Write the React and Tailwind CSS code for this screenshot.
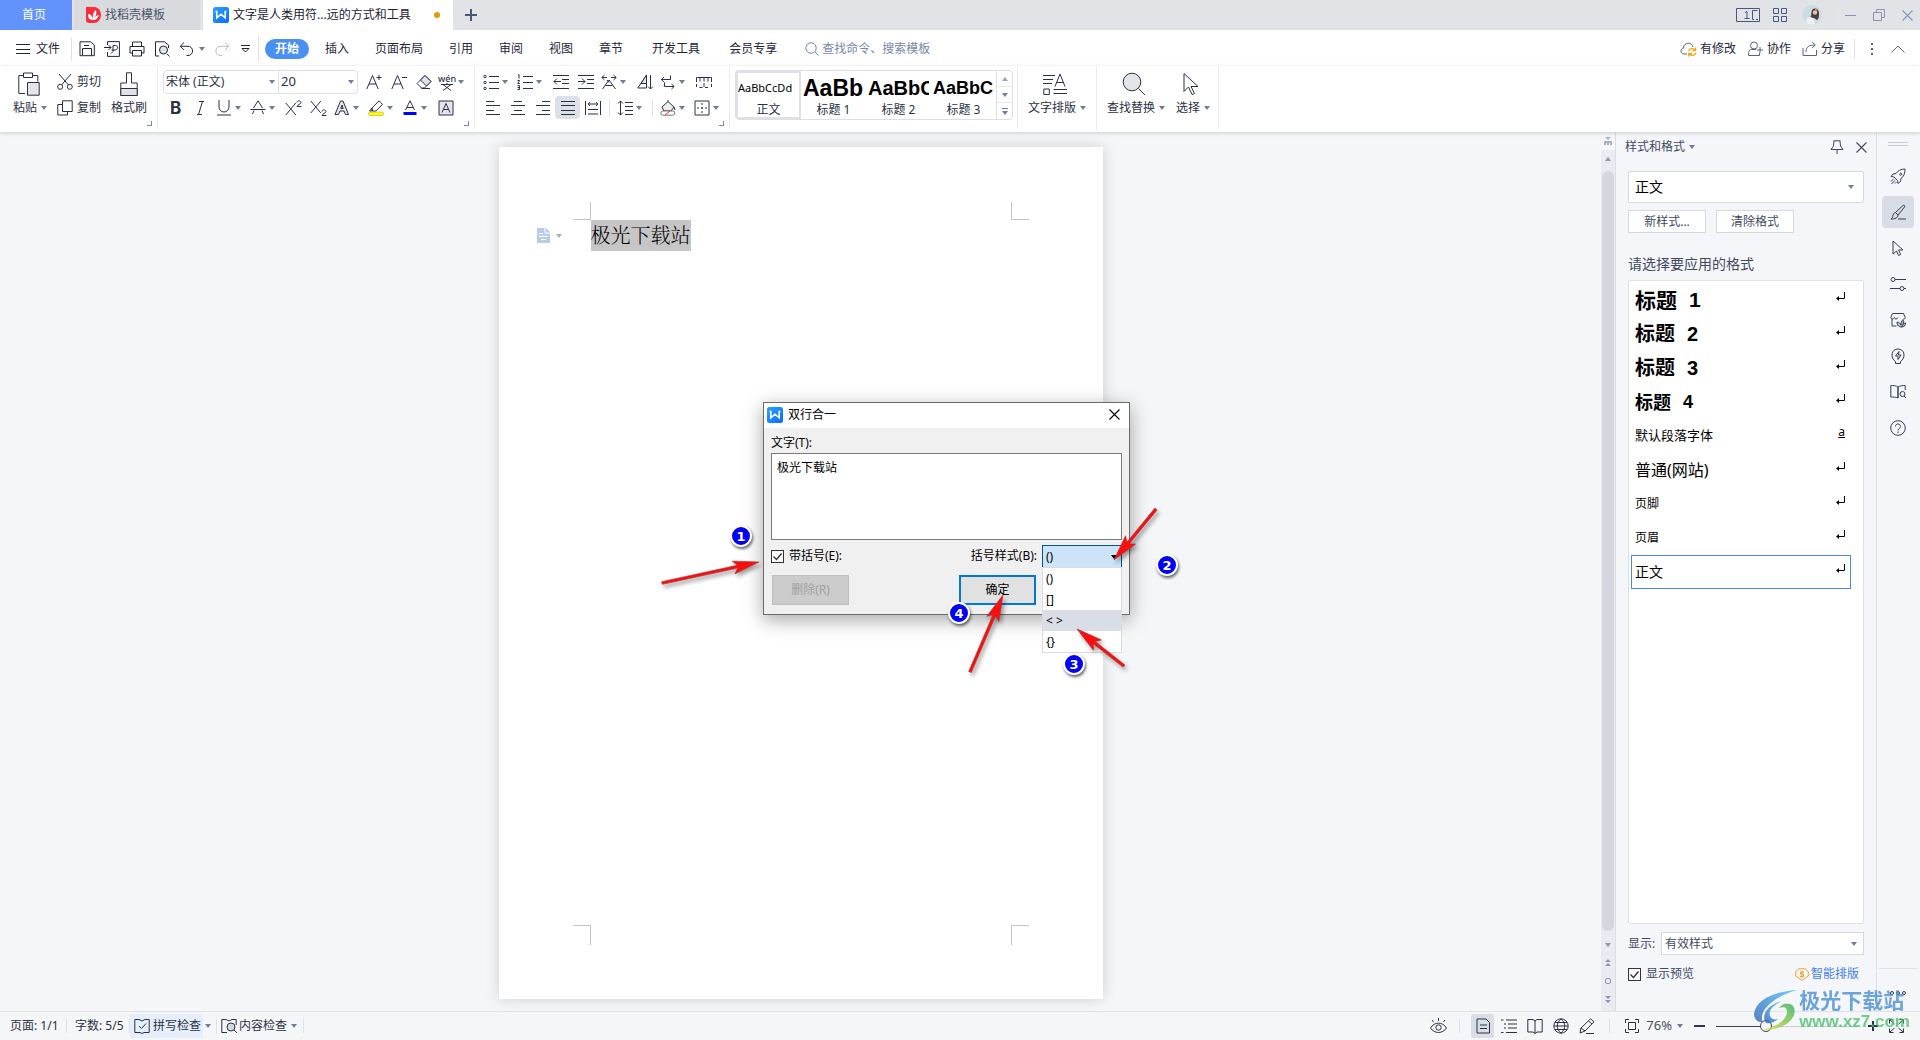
import { useState } from "react";
import clsx from "clsx";

const Ico = ({ w = 16, h = 16, children, className, sw = 1 }) => (
  <svg
    width={w}
    height={h}
    viewBox={`0 0 ${w} ${h}`}
    fill="none"
    stroke="currentColor"
    strokeWidth={sw}
    className={clsx("shrink-0", className)}
    aria-hidden="true"
  >
    {children}
  </svg>
);

const Caret = ({ className }) => (
  <svg width="6" height="4" viewBox="0 0 6 4" className={clsx("shrink-0", className || "fill-[#6f7d99]")} aria-hidden="true">
    <path d="M0 0h6L3 4z" />
  </svg>
);

const Sep = ({ className }) => <span className={clsx("w-px shrink-0 bg-[#dfe1e6]", className)} />;

// Ribbon tool, the ones with a caret are a bit wider
const Tool = ({ label, caret, active, children }) => (
  <button
    aria-label={label}
    className={clsx(
      "flex h-[23px] shrink-0 items-center rounded-sm",
      caret ? "w-[34px]" : "w-[25px] justify-center",
      active && "bg-[#dce0e7]"
    )}
  >
    {caret ? (
      <>
        <span className="flex w-[22px] justify-center">{children}</span>
        <Caret />
      </>
    ) : (
      children
    )}
  </button>
);

const WpsLogo = ({ size = 16 }) => (
  <svg width={size} height={size} viewBox="0 0 16 16" className="shrink-0" aria-hidden="true">
    <defs>
      <linearGradient id="wps" x1="0" y1="0" x2="1" y2="1">
        <stop offset="0" stopColor="#2aa3fb" />
        <stop offset="1" stopColor="#0a6cff" />
      </linearGradient>
    </defs>
    <rect width="16" height="16" rx="2.5" fill="url(#wps)" />
    <path d="M2.500 4.500h1.300v6.300L8 7.200l4.200 3.600V4.500h1.300" fill="none" stroke="#fff" strokeWidth="1.6" />
  </svg>
);

const Tick = () => (
  <svg width="13" height="13" viewBox="0 0 13 13" fill="none" stroke="#333" strokeWidth="1.4" className="pointer-events-none [grid-area:1/1]" aria-hidden="true">
    <path d="M2.500 6.500l3 3 5-6" />
  </svg>
);

const CheckField = ({ id, label, gap }) => {
  const [checked, setChecked] = useState(true);
  return (
    <div className={clsx("flex items-center", gap)}>
      <span className="grid">
        <input
          id={id}
          type="checkbox"
          checked={checked}
          onChange={() => setChecked(!checked)}
          className="size-[13px] appearance-none border border-[#333] bg-white [grid-area:1/1]"
        />
        {checked && <Tick />}
      </span>
      <label htmlFor={id}>{label}</label>
    </div>
  );
};

const CloseX = ({ size = 11 }) => (
  <svg width={size} height={size} viewBox="0 0 11 11" fill="none" stroke="currentColor" strokeWidth="1.1" aria-hidden="true">
    <path d="M.5.5l10 10M10.500.5l-10 10" />
  </svg>
);

const TitleBar = () => (
  <header className="flex h-[30px] shrink-0 items-stretch bg-[#e1e3e7]">
    <button className="w-[72px] bg-[#6292fb] pr-1 text-white">首页</button>
    <button className="ml-0.5 flex w-[126px] items-center bg-[#d8dadd] pl-3 text-[#4b5468]">
      <svg width="15" height="16" viewBox="0 0 15 16" className="mr-1" aria-hidden="true">
        <path d="M0 0h8a7 8 0 0 1 0 16H3a3 3 0 0 1-3-3z" fill="#fb2b3b" />
        <path d="M7 13C2 13 2 9 2 7c3 0 4 2 5 5C7 8 7 5 10 3c1 3 0 6-2 8 2-2 3-3 5-3-1 3-3 5-6 5z" fill="#fff" />
      </svg>
      找稻壳模板
    </button>
    <button className="ml-[3px] flex w-[250px] items-center bg-white pl-2.5 text-[#1c2233]">
      <WpsLogo />
      <span className="ml-1">文字是人类用符...远的方式和工具</span>
      <span className="mr-[13px] ml-auto size-1.5 rounded-full bg-[#e59700]" />
    </button>
    <button aria-label="新建" className="flex w-9 items-center justify-center text-[#4a5878]">
      <Ico w={12} h={12} sw={2}>
        <path d="M6 0v12M0 6h12" />
      </Ico>
    </button>
    <div className="ml-auto flex items-center text-[#46587c]">
      <button aria-label="窗口">
        <Ico w={24} h={14}>
          <path d="M.5.5h23v13H.5zM21.500 2.500h-5v9h1.500M20 11.500h2M9 4.500l2-1v7M8.500 10.500h5" />
        </Ico>
      </button>
      <button aria-label="应用" className="ml-[13px]">
        <Ico w={14} h={14}>
          <path d="M.5.5h5v5h-5zM8.500.5h5v5h-5zM.5 8.500h5v5h-5zM8.500 8.500h5v5h-5z" />
        </Ico>
      </button>
      <button aria-label="账号" className="ml-[15px]">
        <svg width="20" height="20" viewBox="0 0 20 20" aria-hidden="true">
          <circle cx="10" cy="10" r="10" fill="#cbdde2" />
          <path d="M10 5c3-3 7-1 7 3 0 3 0 6-2 7l-3-2-5 0c3-1 2-5 3-8z" fill="#4a3d42" />
          <circle cx="13" cy="7.500" r="2.200" fill="#e8bfae" />
          <circle cx="14" cy="4.500" r="1" fill="#e3a63b" />
          <path d="M5 13c3-2 5-1 7 1l1 5c-4 2-8 0-9-2z" fill="#e9f1f3" />
        </svg>
      </button>
      <Sep className="ml-2.5 h-5 bg-[#c9ccd4]" />
      <div className="mr-[3px] ml-3 flex items-center gap-[17px] text-[#8695b3]">
        <button aria-label="最小化">
          <Ico w={11} h={11}>
            <path d="M0 5.500h11" />
          </Ico>
        </button>
        <button aria-label="还原">
          <Ico w={12} h={12}>
            <path d="M.5 3.500h8v8h-8zM3.500 3V.5h8v8H9" />
          </Ico>
        </button>
        <button aria-label="关闭" className="mr-1">
          <CloseX />
        </button>
      </div>
    </div>
  </header>
);

const menus = ["插入", "页面布局", "引用", "审阅", "视图", "章节"];

const MenuBar = () => (
  <nav className="flex h-9 shrink-0 items-center bg-white pt-0.5 text-[#1f2638]">
    <button className="flex items-center pl-4">
      <Ico w={14} className="mr-1.5">
        <path d="M0 3.500h14M0 8.500h14M0 12.500h14" />
      </Ico>
      文件
    </button>
    <Sep className="ml-[11px] h-6" />
    <div className="ml-[7px] flex items-center gap-[9px]">
      <button aria-label="保存">
        <Ico>
          <path d="M1 .8h10.500L15.300 4v10.700H1zM3.500 14.500V7.500h9v7M5 4.500h5" />
        </Ico>
      </button>
      <button aria-label="输出为PDF">
        <Ico>
          <path d="M3.500 4V.6h11.900v14.800H3.500V11M0 6.500h7M4.500 4L7 6.500 4.500 9M7 12.500l2-2V4.500h2.500c3 0 2.500 4 0 4.500H7.500" />
        </Ico>
      </button>
      <button aria-label="打印">
        <Ico>
          <path d="M3.500 5V1h9v4M3.500 12H1V5.500h14V12h-2.500M3.500 9.500h9V15h-9z" />
        </Ico>
      </button>
      <button aria-label="打印预览">
        <Ico>
          <path d="M5 15H1.500V.8h9L14.500 4v3M13 13l2.500 2.500" />
          <circle cx="9.500" cy="9" r="4" fill="#dfe2e8" />
        </Ico>
      </button>
      <button aria-label="撤销" className="flex items-center gap-1">
        <Ico>
          <path d="M5 1.500L1.200 5.300 5 9M1.500 5.300H9a4.500 4.500 0 0 1 0 9.200H7.500" />
        </Ico>
        <Caret />
      </button>
      <button aria-label="恢复" className="text-[#b5b8c0]">
        <Ico>
          <path d="M11 1.500l3.800 3.800L11 9M14.500 5.300H6.500a4.500 4.500 0 0 0 0 9.200H8" />
        </Ico>
      </button>
      <button aria-label="更多命令" className="ml-0.5">
        <Ico w={9} h={8}>
          <path d="M0 .5h9M1 3.500h7L4.500 7z" />
        </Ico>
      </button>
    </div>
    <Sep className="ml-2 h-6" />
    <button className="mr-[3px] ml-1.5 h-5 w-11 rounded-full bg-[#4a8ff2] font-bold text-white">开始</button>
    {menus.map((m) => (
      <button key={m} className="px-[13px]">
        {m}
      </button>
    ))}
    <button className="ml-[3px] px-[13px]">开发工具</button>
    <button className="ml-[3px] px-[13px]">会员专享</button>
    <div className="ml-[15px] flex items-center text-[#7887a5]">
      <Ico w={14} h={14} className="mr-[3px]">
        <circle cx="6" cy="6" r="5.200" />
        <path d="M10 10l3.500 3.500" />
      </Ico>
      <input
        aria-label="查找命令、搜索模板"
        placeholder="查找命令、搜索模板"
        className="w-32 outline-none placeholder:text-[#7887a5]"
      />
    </div>
    <div className="ml-auto flex items-center">
      <button className="flex items-center gap-[3px]">
        <Ico w={17}>
          <path d="M7 13H4C0 13 0 7.500 3.500 7 3.500 1 12 .5 13 6" stroke="#59657e" />
          <path d="M8.500 10c1-3 5-3 6.500-1M15.500 6.500V9.500h-3M16 12c-1 3-5 3-6.500 1M8.800 15.500v-3h3" stroke="#f5a50b" strokeWidth="1.400" />
        </Ico>
        有修改
      </button>
      <button className="ml-3 flex items-center gap-1">
        <Ico w={15} className="text-[#59657e]">
          <circle cx="6" cy="4.500" r="3.500" />
          <path d="M8 8.500H3.500C1.500 8.500.5 10 .5 14.500h11V12M12 6v6M9 9h6" />
        </Ico>
        协作
      </button>
      <button className="ml-[11px] flex items-center gap-1">
        <Ico w={15} className="text-[#59657e]">
          <path d="M1 7v7.500h13.500V9M4 11c0-5 3-7 9-7M10 .8L13.300 4 10 7.200" />
        </Ico>
        分享
      </button>
      <Sep className="ml-[9px] h-5" />
      <button aria-label="更多" className="ml-4">
        <svg width="3" height="12" className="fill-[#59657e]" aria-hidden="true">
          <path d="M0 0h2v2H0zM0 5h2v2H0zM0 10h2v2H0z" />
        </svg>
      </button>
      <button aria-label="折叠功能区" className="mr-[15px] ml-[17px] text-[#59657e]">
        <Ico w={14} h={8}>
          <path d="M.5 7.500L7 1l6.500 6.500" />
        </Ico>
      </button>
    </div>
  </nav>
);

const Launcher = () => (
  <button aria-label="更多设置" className="absolute right-[5px] bottom-1 size-[5px] border-r border-b border-[#7d8aa5]" />
);

const Letter = ({ children, className }) => (
  <span className={clsx("font-['Inter','Liberation_Sans',sans-serif] leading-4", className)}>{children}</span>
);

const ClipboardGroup = () => (
  <div className="relative flex w-[158px] shrink-0 border-r border-[#ebecef] pl-[13px]">
    <button className="flex w-9 flex-col items-center pt-1.5">
      <Ico w={22} h={24} className="mr-1">
        <path d="M7 21.500H.8V3.500h19v6" />
        <path d="M5.500 1h9v4.500h-9z" fill="#fff" />
        <path d="M9.500 10.500h11.700v12.700H9.500z" fill="#e3e5e9" />
      </Ico>
      <span className="mt-1 flex items-center gap-1 self-start">
        粘贴
        <Caret />
      </span>
    </button>
    <div className="ml-2 flex w-12 flex-col gap-2.5 pt-2">
      <button className="flex items-center gap-1">
        <Ico>
          <path d="M2 0l9.500 11M14 0L4.500 11" />
          <circle cx="3.200" cy="12.800" r="2.500" />
          <circle cx="12.800" cy="12.800" r="2.500" />
        </Ico>
        剪切
      </button>
      <button className="flex items-center gap-1">
        <Ico>
          <path d="M5.500.8h9.700v10.700H5.500zM5.500 4.500H.8V15h9.700v-3.500" />
        </Ico>
        复制
      </button>
    </div>
    <button className="ml-1.5 flex flex-col items-center pt-1.5">
      <Ico w={18} h={24}>
        <path d="M6.500 11V.8h5V11h5.700v12.500H.8V11z" />
        <path d="M.8 16.500h16.400v7H.8z" fill="#dfe2e8" />
      </Ico>
      <span className="mt-1">格式刷</span>
    </button>
    <Launcher />
  </div>
);

const FontGroup = () => (
  <div className="relative flex w-[317px] shrink-0 flex-col gap-0.5 border-r border-[#ebecef] pt-1 pl-[5px]">
    <div className="flex items-center">
      <div className="mr-[3px] flex h-6 w-[195px] rounded-sm border border-[#dcdee3]">
        <div className="grid w-[115px] items-center border-r border-[#dcdee3]">
          <select aria-label="字体" className="appearance-none pl-0.5 outline-none [grid-area:1/1]">
            <option>宋体 (正文)</option>
          </select>
          <Caret className="pointer-events-none mr-[3px] justify-self-end fill-[#6f7d99] [grid-area:1/1]" />
        </div>
        <div className="grid grow items-center">
          <select aria-label="字号" className="appearance-none pl-0.5 text-[13px] outline-none [grid-area:1/1]">
            <option>20</option>
          </select>
          <Caret className="pointer-events-none mr-[3px] justify-self-end fill-[#6f7d99] [grid-area:1/1]" />
        </div>
      </div>
      <Tool label="增大字号">
        <Ico>
          <path d="M.8 15L6.500 1.500 12.200 15M3 10h7M10.500 3.500h5M13 1v5" />
        </Ico>
      </Tool>
      <Tool label="减小字号">
        <Ico>
          <path d="M.8 15L6.500 1.500 12.200 15M3 10h7M11 3.500h5" />
        </Ico>
      </Tool>
      <Tool label="清除格式">
        <Ico>
          <path d="M9 1.500l6 6-6.500 6.500H5.500L1 9.500z" />
          <path d="M4.500 6L9 1.500l6 6L10.500 12z" fill="#dfe2e8" />
          <path d="M5.500 14.500H14" />
        </Ico>
      </Tool>
      <Tool label="拼音指南" caret>
        <span className="flex flex-col items-center">
          <span className="text-[9px] leading-[9px] font-medium">wén</span>
          <Ico w={12} h={8}>
            <path d="M6 0v1.500M0 1.500h12M2 1.500l8 6M10 1.500l-8 6" />
          </Ico>
        </span>
      </Tool>
    </div>
    <div className="flex items-center">
      <Tool label="加粗">
        <Letter className="text-[17px] font-bold">B</Letter>
      </Tool>
      <Tool label="倾斜">
        <Ico>
          <path d="M6 1.500h5M4 14.500h5M9.500 1.500l-4 13" />
        </Ico>
      </Tool>
      <Tool label="下划线" caret>
        <Ico>
          <path d="M3 0v7a5 5 0 0 0 10 0V0M1 15h14" />
        </Ico>
      </Tool>
      <Tool label="删除线" caret>
        <Ico>
          <path d="M3.500 8L8 .8 12.500 8M.5 9.500h15M2.500 14l1.500-3.500M13.500 14L12 10.500" />
        </Ico>
      </Tool>
      <Tool label="上标">
        <Ico w={17}>
          <path d="M.8 3l10 12M10.800 3l-10 12M12 2.500c0-2.500 4-2 4 0 0 1.500-4 2.500-4 4h4.500" />
        </Ico>
      </Tool>
      <Tool label="下标">
        <Ico w={17}>
          <path d="M.8 1l10 12M10.800 1l-10 12M12 11.500c0-2.500 4-2 4 0 0 1.500-4 2.500-4 4h4.500" />
        </Ico>
      </Tool>
      <Tool label="文字效果" caret>
        <Ico>
          <path d="M1 14.500L6.500 1h2.500l5.500 13.500h-3L10 11H6l-1.500 3.500zM6.800 8.500h2.400L8 5z" fill="#e3e5ea" />
        </Ico>
      </Tool>
      <Tool label="突出显示" caret>
        <Ico>
          <path d="M4 8L11 .8l3.500 3.500L8 11H4zM4 8v3H1.500z" />
          <rect x=".5" y="12" width="15" height="3.500" rx="1.500" fill="#ffff00" stroke="#b5b04a" strokeWidth=".6" />
        </Ico>
      </Tool>
      <Tool label="字体颜色" caret>
        <Ico>
          <path d="M3.500 10L8 .8l4.500 9.200M5 7.500h6" />
          <path d="M1.500 12h13v3h-13z" fill="#0000ff" stroke="none" />
        </Ico>
      </Tool>
      <Tool label="字符底纹">
        <Ico>
          <path d="M1 1h14v14H1z" fill="#e3e5e9" />
          <path d="M4 12.500L8 3.500l4 9M5.500 9.500h5" />
        </Ico>
      </Tool>
    </div>
    <Launcher />
  </div>
);

const ParagraphGroup = () => (
  <div className="relative flex w-[255px] shrink-0 flex-col gap-[3px] border-r border-[#ebecef] pt-1 pl-[5px]">
    <div className="flex items-center">
      <Tool label="项目符号" caret>
        <Ico>
          <path d="M6 2.500h10M6 8.500h10M6 14.500h10" />
          <circle cx="2" cy="2.500" r="1.200" />
          <circle cx="2" cy="8.500" r="1.200" />
          <circle cx="2" cy="14.500" r="1.200" />
        </Ico>
      </Tool>
      <Tool label="编号" caret>
        <Ico>
          <path d="M6 2.500h10M6 8.500h10M6 14.500h10M1 1l1-.5v4M.5 6.500h2L.8 9.500h2M.5 11.500h2v4h-2M.5 13.500h2" />
        </Ico>
      </Tool>
      <Tool label="减少缩进">
        <Ico>
          <path d="M0 1.500h16M9 5.500h7M9 9.500h7M0 14.500h16M1 7.500h7M4 4.500l-3 3 3 3" />
        </Ico>
      </Tool>
      <Tool label="增加缩进">
        <Ico>
          <path d="M0 1.500h16M9 5.500h7M9 9.500h7M0 14.500h16M0 7.500h7M4 4.500l3 3-3 3" />
        </Ico>
      </Tool>
      <Tool label="中文版式" caret>
        <Ico>
          <path d="M1.500 15L8 6l6.500 9M4.500 11.500h7M.8 3.500h5.200M3.500 1L.8 3.500 3.500 6M15.200 3.500H10M12.500 1l2.700 2.500L12.500 6M6 6l2 2.500" />
        </Ico>
      </Tool>
      <Tool label="排序">
        <Ico>
          <path d="M9.500 1v13H.8zM4 9.500h5.500M13.500 1v14M11 12.500l2.500 2.500 2.500-2.500" />
          <path d="M9.500 1v8.500H4z" fill="#dfe2e8" />
        </Ico>
      </Tool>
      <Tool label="换行" caret>
        <Ico>
          <path d="M10.500 1.500v4H1.500M4 3L1.300 5.500 4 8M4.500 8.500v4h9.500M11.500 10l2.700 2.500L11.500 15" />
        </Ico>
      </Tool>
      <Tool label="标尺">
        <Ico>
          <path d="M.5 8V3.500h15V8M4 3.500v4M8 3.500v4M12 3.500v4M.5 10v3M3.500 13.500h3M9 13.500h3M15.500 10v3M8 9v4" />
        </Ico>
      </Tool>
    </div>
    <div className="flex items-center">
      <Tool label="左对齐">
        <Ico>
          <path d="M1 1.500h8M1 5.500h14M1 10.500h8M1 14.500h14" />
        </Ico>
      </Tool>
      <Tool label="居中">
        <Ico>
          <path d="M4 1.500h8M1 5.500h14M4 10.500h8M1 14.500h14" />
        </Ico>
      </Tool>
      <Tool label="右对齐">
        <Ico>
          <path d="M7 1.500h8M1 5.500h14M7 10.500h8M1 14.500h14" />
        </Ico>
      </Tool>
      <Tool label="两端对齐" active>
        <Ico>
          <path d="M1 1.500h14M1 5.500h14M1 10.500h14M1 14.500h14" />
        </Ico>
      </Tool>
      <Tool label="分散对齐">
        <Ico>
          <path d="M.5 1v14M15.500 1v14M3 4h10M5 2L3 4l2 2M11 2l2 2-2 2M3 9.500h10M3 14h10" />
        </Ico>
      </Tool>
      <Sep className="mx-1 h-[18px]" />
      <Tool label="行距" caret>
        <Ico>
          <path d="M3.500 1v14M1 3.500L3.500 1 6 3.500M1 12.500L3.500 15 6 12.500M8 2.500h8M8 6.500h8M8 10.500h8M8 14.500h8" />
        </Ico>
      </Tool>
      <Sep className="mx-1 h-[18px]" />
      <Tool label="底纹颜色" caret>
        <Ico>
          <path d="M2 7L8 1.500l6 5.500-3 4H4zM8 1.500V0M14 7l1 3" fill="#eceef1" />
          <rect x=".8" y="11" width="14" height="4.200" rx="2" fill="#fff" stroke="#777" />
          <path d="M5 15l5-4" stroke="#e33" />
        </Ico>
      </Tool>
      <Tool label="边框" caret>
        <Ico>
          <path d="M1 1h14v14H1z" />
          <path d="M8 3v10M3 8h10" strokeDasharray="2 2" />
        </Ico>
      </Tool>
    </div>
    <Launcher />
  </div>
);

const presets = [
  { name: "正文", sample: "AaBbCcDd", cls: "font-['Noto_Sans',sans-serif] text-[11px]" },
  { name: "标题 1", sample: "AaBb", cls: "font-['Liberation_Sans',sans-serif] text-[23px] font-bold" },
  { name: "标题 2", sample: "AaBbC", cls: "font-['Liberation_Sans',sans-serif] text-[20px] font-bold" },
  { name: "标题 3", sample: "AaBbC", cls: "font-['Liberation_Sans',sans-serif] text-[18px] font-bold" },
];

const StylesGroup = () => (
  <div className="flex w-[288px] shrink-0 border-r border-[#ebecef] pt-1 pl-[5px]">
    <div className="flex h-[50px] w-[278px] rounded-sm border border-[#dcdee3]">
      {presets.map((p, i) => (
        <button
          key={p.name}
          className={clsx(
            "flex w-[65px] flex-col items-center border-2",
            i === 0 ? "border-[#dfe1e6]" : "border-transparent"
          )}
        >
          <span className={clsx("h-[30px] w-[61px] overflow-hidden text-left leading-[30px] text-black", p.cls)}>
            {p.sample}
          </span>
          <span className="leading-[15px]">{p.name}</span>
        </button>
      ))}
      <div className="flex grow flex-col border-l border-[#dcdee3]">
        <button aria-label="上一行" className="flex h-4 items-center justify-center border-b border-[#e6e7ea]">
          <Caret className="rotate-180 fill-[#9aa5ba]" />
        </button>
        <button aria-label="下一行" className="flex h-4 items-center justify-center border-b border-[#e6e7ea]">
          <Caret />
        </button>
        <button aria-label="展开样式" className="flex h-4 flex-col items-center justify-center gap-0.5">
          <span className="h-px w-1.5 bg-[#6f7d99]" />
          <Caret />
        </button>
      </div>
    </div>
  </div>
);

const BigTool = ({ label, children }) => (
  <button className="flex flex-col items-center">
    <span className="flex h-6 items-center pr-1">{children}</span>
    <span className="mt-1 flex items-center gap-1">
      {label}
      <Caret />
    </span>
  </button>
);

const Ribbon = () => (
  <div className="z-10 h-[66px] shrink-0 bg-white text-[#2a3145] shadow-[0_1px_4px_rgba(0,0,0,0.18)]">
    <div className="flex h-16">
      <ClipboardGroup />
      <FontGroup />
      <ParagraphGroup />
      <StylesGroup />
      <div className="flex w-[79px] shrink-0 border-r border-[#ebecef] pt-1.5 pl-2.5">
        <BigTool label="文字排版">
          <Ico w={24} h={24}>
            <path d="M0 3.500h12M0 7.500h10M0 11.500h9M.8 17h5.500v5.500H.8z" />
            <path d="M10.500 17.500H24M10.500 21.500H24M12 14.500L17 2l5 12.500M13.500 10.500h7" />
          </Ico>
        </BigTool>
      </div>
      <div className="flex w-[122px] shrink-0 gap-[11px] border-r border-[#ebecef] pt-1.5 pl-2.5">
        <BigTool label="查找替换">
          <Ico w={24} h={24}>
            <circle cx="10" cy="10" r="8.800" fill="#e3e5e9" />
            <path d="M16.500 16.500l6.500 6.500" />
          </Ico>
        </BigTool>
        <BigTool label="选择">
          <Ico w={16} h={24}>
            <path d="M1 1.500v18l4.500-4.500 3.500 7.500 2.500-1-3.500-7h7z" />
          </Ico>
        </BigTool>
      </div>
    </div>
  </div>
);

const ScrollRail = () => (
  <div className="flex w-[15px] shrink-0 flex-col items-center border-r border-[#dcdee5] bg-[#eaebf1] text-[#8a96b3]">
    <div className="flex h-[18px] w-full items-center justify-center bg-[#f5f6f9]">
      <svg width="8" height="8" className="fill-[#a9b2c8]" aria-hidden="true">
        <path d="M1 0h6L4 3zM0 4h8v4H6V6H5v2H3V6H2v2H0z" />
      </svg>
    </div>
    <button aria-label="向上滚动" className="flex h-[21px] items-center pb-1">
      <Caret className="rotate-180 fill-[#8a96b3]" />
    </button>
    <div className="w-3 grow rounded-full bg-[#d4d7e0]" />
    <div className="flex h-20 flex-col items-center justify-between pt-3 pb-2">
      <Caret className="fill-[#8a96b3]" />
      <svg width="6" height="7" fill="currentColor" aria-hidden="true">
        <path d="M3 0l3 3H0zM3 4l3 3H0z" />
      </svg>
      <span className="size-1.5 rounded-xs border border-[#8a96b3]" />
      <svg width="6" height="7" fill="currentColor" aria-hidden="true">
        <path d="M0 0h6L3 3zM0 4h6L3 7z" />
      </svg>
    </div>
  </div>
);

const Paper = () => (
  <main className="flex min-w-0 flex-1 justify-center bg-[#f5f6f8] pt-[15px] pb-3">
    <article className="flex w-[604px] flex-col bg-white pt-[55px] pb-[54px] shadow-[0_0_14px_rgba(0,0,0,0.16)]">
      <div className="flex justify-between px-[74px]">
        <span className="h-[18px] w-[18px] border-r border-b border-[#c4c4c4]" />
        <span className="h-[18px] w-[18px] border-b border-l border-[#c4c4c4]" />
      </div>
      <div className="flex h-[31px] items-center pl-[38px]">
        <svg width="13" height="15" viewBox="0 0 13 15" aria-hidden="true">
          <path d="M0 0h9l4 4v11H0z" fill="#b8cbea" />
          <path d="M8 0v5h5M2 5.500h4M2 8.500h9M4 11.500h5" fill="none" stroke="#fff" />
        </svg>
        <Caret className="ml-1.5 fill-[#b0b0b0]" />
        <p className="ml-[29px] bg-[#c6c6c6] pb-0.5 font-['Noto_Serif_CJK_SC','Noto_Sans_CJK_SC',serif] text-[20px] leading-[29px] font-light text-black">
          极光下载站
        </p>
      </div>
      <div className="mt-auto flex justify-between px-[74px]">
        <span className="h-5 w-[18px] border-t border-r border-[#c4c4c4]" />
        <span className="h-5 w-[18px] border-t border-l border-[#c4c4c4]" />
      </div>
    </article>
  </main>
);

const styleList = [
  { name: "标题", num: "1", cls: "text-[21px] font-bold" },
  { name: "标题", num: "2", cls: "text-[20px] font-bold" },
  { name: "标题", num: "3", cls: "text-[20px] font-bold" },
  { name: "标题", num: "4", cls: "text-[18px] font-bold" },
  { name: "默认段落字体", char: true, cls: "text-[13px]" },
  { name: "普通(网站)", cls: "text-base" },
  { name: "页脚", cls: "text-xs" },
  { name: "页眉", cls: "text-xs" },
  { name: "正文", cls: "text-sm" },
];

const StylePanel = () => {
  const [current, setCurrent] = useState(8);
  return (
    <aside className="flex w-[260px] shrink-0 flex-col pr-3 pb-[29px] pl-3 text-[#3f4a60]">
      <div className="-ml-[3px] flex h-[30px] items-center gap-1">
        样式和格式
        <Caret />
        <button aria-label="固定" className="ml-auto">
          <Ico w={14} h={14}>
            <path d="M3.500.8h7M4 1l-.5 5L1 9.500h12L10.500 6 10 1M7 9.500V14" />
          </Ico>
        </button>
        <button aria-label="关闭面板" className="mr-[-3px] ml-2">
          <CloseX />
        </button>
      </div>
      <div className="mt-[9px] grid h-8 shrink-0 items-center rounded-xs border border-[#d5d8de] bg-white">
        <select aria-label="当前样式" className="appearance-none pl-1.5 text-sm text-black outline-none [grid-area:1/1]">
          <option>正文</option>
        </select>
        <Caret className="pointer-events-none mr-[9px] justify-self-end fill-[#6f7d99] [grid-area:1/1]" />
      </div>
      <div className="mt-[7px] flex gap-2.5">
        <button className="h-[23px] w-[78px] border border-[#d5d8de] bg-white">新样式...</button>
        <button className="h-[23px] w-[78px] border border-[#d5d8de] bg-white">清除格式</button>
      </div>
      <h2 className="mt-5 text-sm leading-[22px]">请选择要应用的格式</h2>
      <ul className="mt-[5px] min-h-0 grow rounded-xs border border-[#dfe1e6] bg-white p-0.5 text-black">
        {styleList.map((s, i) => (
          <li key={s.name + (s.num || "")}>
            <button
              onClick={() => setCurrent(i)}
              className={clsx(
                "flex h-[34px] w-[220px] items-center border pl-[3px]",
                i === current ? "border-[#4a8ad8]" : "border-transparent",
                s.cls
              )}
            >
              {s.name}
              {s.num && <span className="ml-3 font-['Liberation_Sans',sans-serif]">{s.num}</span>}
              <span className="mr-[5px] mb-2 ml-auto">
                {s.char ? (
                  <span className="block text-xs leading-3 underline">a</span>
                ) : (
                  <svg width="9" height="9" fill="none" stroke="#000" aria-hidden="true">
                    <path d="M8.500 0v6.500H1" />
                    <path d="M0 6.500L3 4v5z" fill="#000" stroke="none" />
                  </svg>
                )}
              </span>
            </button>
          </li>
        ))}
      </ul>
      <div className="mt-2 flex h-[23px] shrink-0 items-center justify-between">
        <label htmlFor="show">显示:</label>
        <div className="grid h-[23px] w-[203px] items-center border border-[#d5d8de] bg-white">
          <select id="show" className="appearance-none pl-[3px] outline-none [grid-area:1/1]">
            <option>有效样式</option>
          </select>
          <Caret className="pointer-events-none mr-1.5 justify-self-end fill-[#6f7d99] [grid-area:1/1]" />
        </div>
      </div>
      <div className="mt-[11px] flex h-4 items-center justify-between">
        <CheckField id="preview" label="显示预览" gap="gap-[5px]" />
        <a href="#layout" className="mr-[5px] flex items-center gap-0.5 text-[#3f7df0]">
          <Ico w={14} h={13} className="text-[#f0a12b]">
            <path d="M3.500.8h7L13.300 4v4L7 12.500.8 8V4z" />
            <path d="M9 4H5.500v2.200h3v2.300H5M7 3v7" />
          </Ico>
          智能排版
        </a>
      </div>
    </aside>
  );
};

const sideTools = [
  {
    label: "推荐",
    art: <path d="M15 1c-4 0-7 1.500-9 4.500L3 6 1 8.500l3 .5 3.500 3.500.5 3 2.500-2 .5-3C14 8.500 15 5 15 1zM3.500 11L1 13.500M5 12.500L1.500 16M6.500 14L5 15.500M10 5.500a1 1 0 1 0 1.500 1.500A1 1 0 0 0 10 5.500z" />,
  },
  { label: "样式", art: <path d="M13 1.500c1-1 2.500.5 1.500 1.500L8 11 5.500 8.500zM5.500 8.500L8 11c0 3-3 4-7 4 2-1 1.500-2 2-4 .5-1.500 1.500-2.500 2.500-2.500zM8 15h8" /> },
  { label: "选择窗格", art: <path d="M3 1v13l3.500-3 2 4.500 2.200-1L8.500 10H13z" /> },
  {
    label: "属性",
    art: (
      <>
        <circle cx="3" cy="3.500" r="2" />
        <circle cx="12" cy="12.500" r="2" />
        <path d="M5 3.500h11M0 12.500h10M14 12.500h2" />
      </>
    ),
  },
  {
    label: "稻壳",
    art: (
      <>
        <path d="M6.500 14H2V7M.8 5.500L2.500 1.500h11l1.700 4c0 1.500-1.200 1.800-1.700 1.500M.8 5.500c0 2 3 2 3.500 0 .5 2 3 2 3.500 0" />
        <path d="M11.500 15C8 15 7 12.500 7 10c2 0 3.500 1.500 4 3 0-2 .5-4 2-5.500.8 1.500.8 3 .2 4.500.8-.6 1.500-1 2.600-1-.3 2.500-1.800 4-4.300 4zM11.500 15l2-3.500" fill="#b9bdc8" />
      </>
    ),
  },
  { label: "技巧", art: <path d="M5.500 13.500C0 10 1 1 8 1s8 9 2.500 12.500v2h-5zM9 3.500L5.500 8H8v3.500L11 7H8.500z" /> },
  {
    label: "词典",
    art: (
      <>
        <path d="M8 14V3C6 1.500 3 1.500.8 1.500V13c2.200 0 5 0 7.200 1V3c2-1.500 5-1.500 7.200-1.500V6" />
        <circle cx="12.500" cy="10" r="2.500" />
        <path d="M14 12l2 2" />
      </>
    ),
  },
  {
    label: "帮助",
    art: (
      <>
        <circle cx="8" cy="8" r="7.300" />
        <path d="M5.500 6.500c0-3.500 5-3.300 5 0 0 2-2.500 2-2.500 4M8 11.500V13" />
      </>
    ),
  },
];

const SideRail = () => (
  <div className="flex w-11 shrink-0 flex-col items-center border-l border-[#dfe1e8] pt-2.5 pr-0.5 text-[#333d56]">
    <span className="h-1 w-5 border-t border-b border-[#c9ccd5]" />
    <div className="mt-3.5 flex flex-col gap-1">
      {sideTools.map((t, i) => (
        <button
          key={t.label}
          aria-label={t.label}
          className={clsx("flex size-8 items-center justify-center rounded-sm", i === 1 && "bg-[#d8dce4]")}
        >
          <Ico>{t.art}</Ico>
        </button>
      ))}
    </div>
    <span className="mt-auto h-px w-[38px] bg-[#dfe1e8]" />
    <button aria-label="更多" className="mt-[22px] mb-4 flex gap-0.5">
      <span className="size-1 rounded-full border border-[#333d56]" />
      <span className="size-1 rounded-full border border-[#333d56]" />
      <span className="size-1 rounded-full border border-[#333d56]" />
    </button>
  </div>
);

const views = [
  { label: "页面视图", art: <path d="M2 1h9l3.500 3.500V15H2zM5 7h7M5 10.500h7" /> },
  { label: "大纲", art: <path d="M0 2h2.500M5 2h11M3 6h2M7 6h9M3 10h2M7 10h9M0 14.500h2.500M5 14.500h11" /> },
  { label: "阅读版式", art: <path d="M.8 1.500H6l2 1.500 2-1.500h5.200v12.500H10L8 15.500 6 14H.8zM8 3v12.500" /> },
  {
    label: "Web版式",
    art: (
      <>
        <circle cx="8" cy="8" r="7.200" />
        <path d="M8 1c-5 4-5 10 0 14M8 1c5 4 5 10 0 14M1 8h14M2 4.500h12M2 11.500h12" />
      </>
    ),
  },
  { label: "写作模式", art: <path d="M2 10L11.500.8l3.500 3L6 13l-5 2zM2 10l4 3M9.500 3l3.500 3M7 15.500h8" /> },
];

const StatusBar = () => (
  <footer className="flex h-[29px] shrink-0 items-center border-t border-[#e0e2e6] bg-[#f5f6f8] text-[#2a3145]">
    <span className="ml-2.5 w-14">页面: 1/1</span>
    <Sep className="h-3.5" />
    <span className="ml-2 w-[54px]">字数: 5/5</span>
    <Sep className="h-3.5" />
    <button className="flex h-6 w-[73px] items-center gap-[3px] bg-[#e6eefb] pl-1">
      <Ico>
        <path d="M5 1.500H.8v13H6l2 1 2-1h5.200v-13H11M5 1.500l3 1.500 3-1.500M5 8l2.500 2.500L12 5.500" />
      </Ico>
      拼写检查
    </button>
    <Caret className="ml-0.5 fill-[#6f7d99]" />
    <Sep className="ml-[5px] h-3.5" />
    <button className="ml-1 flex items-center gap-0.5">
      <Ico>
        <path d="M5 1.500H.8v13H6M11 1.500h4.200V7M5 1.500l3 1.500 3-1.500M13 12l3 3" />
        <circle cx="10" cy="9" r="4" fill="#d5d8df" />
      </Ico>
      内容检查
      <Caret className="ml-0.5 fill-[#6f7d99]" />
    </button>
    <Sep className="ml-1.5 h-3.5" />
    <div className="ml-auto flex items-center">
      <button aria-label="护眼模式">
        <Ico w={17} className="mr-3">
          <path d="M.5 10c4-6.500 12-6.500 16 0-4 6-12 6-16 0zM8.500 3V0M3.500 4L2 2M13.500 4L15 2" />
          <circle cx="8.500" cy="9.500" r="2.700" />
        </Ico>
      </button>
      <Sep className="mr-[11px] h-3.5" />
      {views.map((v, i) => (
        <button
          key={v.label}
          aria-label={v.label}
          className={clsx("mr-[3px] flex h-6 w-[23px] items-center justify-center rounded-xs", i === 0 && "bg-[#d9dde4]")}
        >
          <Ico>{v.art}</Ico>
        </button>
      ))}
      <Sep className="ml-2 h-3.5" />
      <button aria-label="页面缩放" className="ml-[15px]">
        <Ico w={14} h={14}>
          <path d="M.5 4V.5H4M10 .5h3.500V4M13.500 10v3.500H10M4 13.500H.5V10M3.500 3.500h7v7h-7z" />
        </Ico>
      </button>
      <button className="ml-[7px] flex items-center gap-[5px] text-[13px] text-[#4a5060]">
        76%
        <Caret />
      </button>
      <button aria-label="缩小" className="ml-[11px] h-0.5 w-[11px] bg-[#2f3850]" />
      <input
        type="range"
        aria-label="缩放比例"
        min="0"
        max="100"
        defaultValue="34"
        className="mx-[11px] h-px w-[141px] appearance-none bg-linear-to-r from-[#3b455e] from-35% to-[#c9ccd3] to-35% [&::-webkit-slider-thumb]:size-3 [&::-webkit-slider-thumb]:appearance-none [&::-webkit-slider-thumb]:rounded-full [&::-webkit-slider-thumb]:border [&::-webkit-slider-thumb]:border-[#3b455e] [&::-webkit-slider-thumb]:bg-[#f5f6f8]"
      />
      <button aria-label="放大">
        <Ico w={10} h={10} sw={2}>
          <path d="M5 0v10M0 5h10" />
        </Ico>
      </button>
      <button aria-label="全屏" className="mr-4 ml-[11px]">
        <Ico w={15} h={14}>
          <path d="M.5 4.500V.5h4M10.500.5h4v4M14.500 9.500v4h-4M4.500 13.500h-4v-4M1 1l4.500 4M14 1L9.500 5M14 13L9.500 9M1 13l4.500-4" />
        </Ico>
      </button>
    </div>
  </footer>
);

const brackets = ["()", "[]", "< >", "{}"];

const CombineDialog = () => (
  <section
    role="dialog"
    aria-label="双行合一"
    className="absolute top-[402px] left-[763px] z-20 h-[213px] w-[367px] border border-[#6b6b6b] bg-[#f0f0f0] text-black shadow-[0_5px_18px_rgba(0,0,0,0.35)]"
  >
    <div className="flex h-[25px] items-center gap-[5px] bg-white pr-[9px] pb-0.5 pl-[3px]">
      <WpsLogo />
      双行合一
      <button aria-label="关闭对话框" className="ml-auto">
        <CloseX />
      </button>
    </div>
    <form className="pr-[7px] pl-[7px]">
      <label htmlFor="words" className="block pt-[7px] leading-4">
        文字(T):
      </label>
      <textarea
        id="words"
        defaultValue="极光下载站"
        className="mt-0.5 block h-[87px] w-full resize-none border border-[#7a7a7a] bg-white px-[5px] py-1.5 leading-4 outline-none"
      />
      <div className="mt-[5px] flex h-[22px] items-center">
        <CheckField id="bracket" label="带括号(E):" gap="gap-[5px]" />
        <label htmlFor="kind" className="mr-[5px] ml-auto">
          括号样式(B):
        </label>
        <div className="relative grid h-[22px] w-20 items-center border border-b-0 border-[#005499] bg-[#cce4f7]">
          <select id="kind" className="appearance-none pl-[3px] outline-none [grid-area:1/1]">
            {brackets.map((b) => (
              <option key={b}>{b}</option>
            ))}
          </select>
          <Caret className="pointer-events-none mr-1 justify-self-end fill-black [grid-area:1/1]" />
          <ul className="absolute top-[21px] -left-px w-20 border border-[#dadce0] bg-white">
            {brackets.map((b) => (
              <li key={b} className={clsx("h-[21px] pl-[3px] leading-[21px]", b === "< >" && "bg-[#d9dde6]")}>
                {b}
              </li>
            ))}
          </ul>
        </div>
      </div>
      <div className="mt-2 mr-[86px] ml-px flex justify-between">
        <button type="button" disabled className="h-[30px] w-[77px] border border-[#bfbfbf] bg-[#ccc] text-[#a0a0a0]">
          删除(R)
        </button>
        <button type="button" className="h-[30px] w-[77px] border-2 border-[#0078d7] bg-[#e1e1e1]">
          确定
        </button>
      </div>
    </form>
  </section>
);

// x/y is the tip, tx/ty is the tail
const arrows = [
  { x: 759, y: 562, tx: 662, ty: 583 },
  { x: 1114, y: 560, tx: 1156, ty: 509 },
  { x: 1077, y: 629, tx: 1124, ty: 666 },
  { x: 1003, y: 595, tx: 970, ty: 672 },
];

const Arrow = ({ x, y, tx, ty }) => {
  const len = Math.hypot(x - tx, y - ty);
  const deg = (Math.atan2(y - ty, x - tx) * 180) / Math.PI;
  return (
    <g transform={`translate(${x} ${y}) rotate(${deg})`}>
      <path
        d={`M0 0L-26 -6.500L-22 -1.400H${-len}V1.400H-22L-26 6.500Z`}
        fill="#fb0d0d"
        stroke="#a33"
        strokeWidth=".6"
        strokeLinejoin="round"
      />
    </g>
  );
};

const Badge = ({ n, className }) => (
  <span
    className={clsx(
      "absolute z-30 flex size-[22px] items-center justify-center rounded-full border-2 border-white bg-[#0000f5] font-['DejaVu_Sans',sans-serif] text-[13px] leading-none font-bold text-white shadow-[1px_2px_3px_rgba(0,0,0,0.6)]",
      className
    )}
  >
    {n}
  </span>
);

const Watermark = () => (
  <div className="pointer-events-none absolute right-2.5 bottom-1.5 z-30 flex items-center gap-0.5 opacity-80">
    <svg width="44" height="42" viewBox="0 0 44 42" aria-hidden="true">
      <defs>
        <linearGradient id="wmBlue" x1="0" y1="1" x2="1" y2="0">
          <stop offset="0" stopColor="#2c63b8" />
          <stop offset="1" stopColor="#58c4f2" />
        </linearGradient>
        <linearGradient id="wmGreen" x1="0" y1="1" x2="1" y2="0">
          <stop offset="0" stopColor="#e8e03a" />
          <stop offset="1" stopColor="#2fae5f" />
        </linearGradient>
      </defs>
      <path d="M44 0C25 1 3 8 1 24c0 5 4 9 9 8-5-8 6-24 34-32z" fill="url(#wmBlue)" />
      <path d="M13 33c-6-9 4-20 16-22-8 4-14 9-12 15 1 3 5 4 8 3-3 3-8 5-12 4z" fill="url(#wmBlue)" />
      <path d="M31 14c10-2 12 5 10 11-4 10-18 16-32 15 14-3 24-9 25-18 0-4-2-6-8-4 1-2 3-3 5-4z" fill="url(#wmGreen)" />
    </svg>
    <div className="flex flex-col pb-0.5">
      <span className="text-[21px] leading-6 font-bold text-[#4a8fd6]">极光下载站</span>
      <span className="font-['Liberation_Sans',sans-serif] text-[17px] leading-5 font-bold text-[#4fbf73]">www.xz7.com</span>
    </div>
  </div>
);

export default function App() {
  return (
    <div className="relative flex h-screen flex-col overflow-hidden bg-[#f5f6f9] font-['Noto_Sans','Noto_Sans_CJK_SC',sans-serif] text-xs whitespace-nowrap">
      <TitleBar />
      <MenuBar />
      <Ribbon />
      <div className="flex min-h-0 flex-1">
        <Paper />
        <ScrollRail />
        <StylePanel />
        <SideRail />
      </div>
      <StatusBar />

      <CombineDialog />
      <svg className="pointer-events-none absolute inset-0 z-30 size-full drop-shadow-[2px_3px_2px_rgba(0,0,0,0.4)]" aria-hidden="true">
        {arrows.map((a) => (
          <Arrow key={a.x} {...a} />
        ))}
      </svg>
      <Badge n="1" className="top-[525px] left-[730px]" />
      <Badge n="2" className="top-[554px] left-[1156px]" />
      <Badge n="3" className="top-[653px] left-[1063px]" />
      <Badge n="4" className="top-[602px] left-[948px]" />
      <Watermark />
    </div>
  );
}
